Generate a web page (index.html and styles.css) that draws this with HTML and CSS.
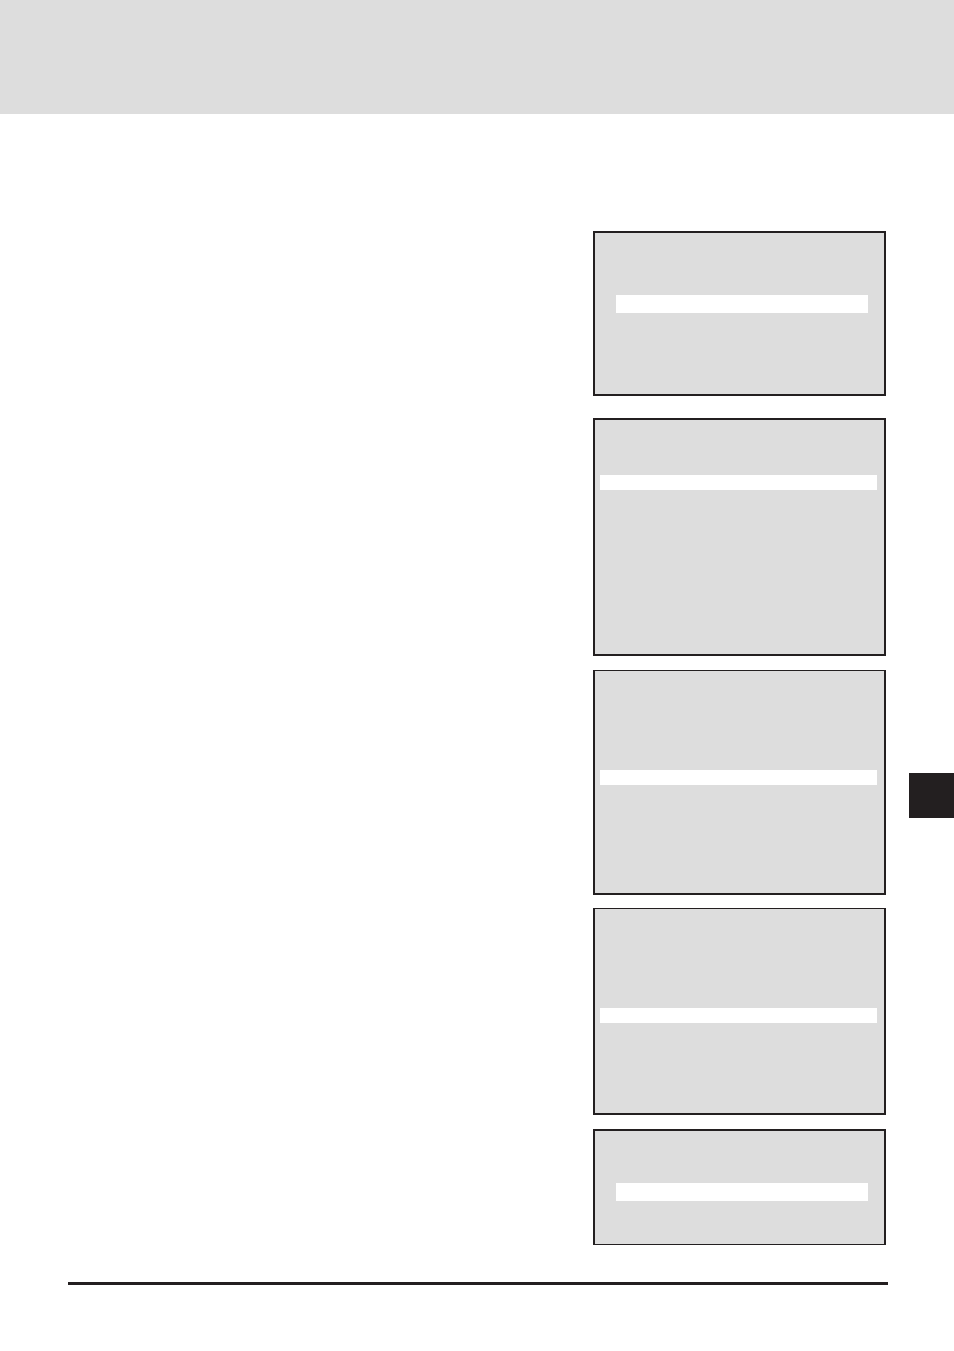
FILE: index.html
```
<!DOCTYPE html>
<html lang="en">
<head>
<meta charset="UTF-8">
<meta name="viewport" content="width=device-width, initial-scale=1.0">
<title>Manual Page</title>
<link rel="stylesheet" href="styles.css">
</head>
<body>
<header class="page-header"></header>
<main class="content">
    <section class="copy"></section>
    <!-- Display screens with the selected line highlighted -->
    <section class="screens">
        <div class="screen screen-short">
            <div class="highlight"></div>
        </div>
        <div class="screen screen-list">
            <div class="highlight"></div>
        </div>
        <div class="screen screen-middle">
            <div class="highlight"></div>
        </div>
        <div class="screen screen-lower">
            <div class="highlight"></div>
        </div>
        <div class="screen screen-last">
            <div class="highlight"></div>
        </div>
    </section>
    <aside class="side">
        <div class="chapter-tab"></div>
    </aside>
</main>
<footer class="page-footer">
    <hr class="rule">
</footer>
</body>
</html>
```

FILE: styles.css
```
* {
    box-sizing: border-box;
}
body {
    margin: 0;
    font-family: "Liberation Sans", Arial, sans-serif;
    background-color: #fff;
    color: #231f20;
}
.page-header {
    height: 114px;
    background-color: #ddd;
}
.content {
    display: grid;
    grid-template-columns: 1fr 293px 68px;
    padding-top: 117px;
}
.screen {
    border: 2px solid #231f20;
    background-color: #ddd;
    margin-bottom: 14px;
    padding: 55px 7px 164px 5px;
}
.highlight {
    height: 15px;
    background-color: #fff;
}
.screen-short {
    padding: 62px 16px 81px 21px;
    margin-bottom: 22px;
}
.screen-middle {
    border-top-width: 1px;
    padding-top: 99px;
    padding-bottom: 108px;
    margin-bottom: 13px;
}
.screen-lower {
    border-top-width: 1px;
    padding-top: 99px;
    padding-bottom: 90px;
}
.screen-last {
    border-bottom-width: 1px;
    padding: 52px 16px 43px 21px;
    margin-bottom: 0;
}
.screen-short .highlight,
.screen-last .highlight {
    height: 18px;
}
/* Black thumb index on the outer edge of the page */
.side {
    display: flex;
    justify-content: flex-end;
    padding-top: 542px;
}
.chapter-tab {
    width: 45px;
    height: 45px;
    background-color: #231f20;
}
.page-footer {
    padding: 37px 66px 66px 68px;
}
.rule {
    height: 3px;
    margin: 0;
    border: none;
    background-color: #231f20;
}
```
